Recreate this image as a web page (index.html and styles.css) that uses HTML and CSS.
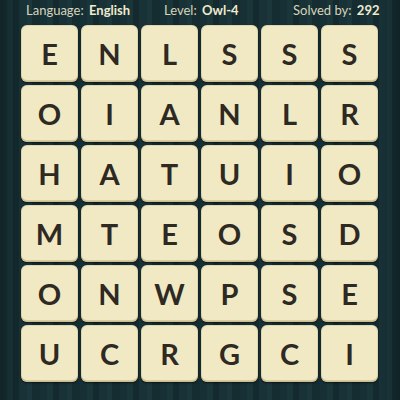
FILE: index.html
```html
<!DOCTYPE html>
<html>
<head>
<meta charset="utf-8">
<link rel="stylesheet" href="styles.css">
</head>
<body>
<div class="page">
  <div class="header">
    <div class="item">Language: <b>English</b></div>
    <div class="item">Level: <b>Owl-4</b></div>
    <div class="item right">Solved by: <b>292</b></div>
  </div>
  <div class="board">
    <div class="tile">E</div><div class="tile">N</div><div class="tile">L</div><div class="tile">S</div><div class="tile">S</div><div class="tile">S</div>
    <div class="tile">O</div><div class="tile">I</div><div class="tile">A</div><div class="tile">N</div><div class="tile">L</div><div class="tile">R</div>
    <div class="tile">H</div><div class="tile">A</div><div class="tile">T</div><div class="tile">U</div><div class="tile">I</div><div class="tile">O</div>
    <div class="tile">M</div><div class="tile">T</div><div class="tile">E</div><div class="tile">O</div><div class="tile">S</div><div class="tile">D</div>
    <div class="tile">O</div><div class="tile">N</div><div class="tile">W</div><div class="tile">P</div><div class="tile">S</div><div class="tile">E</div>
    <div class="tile">U</div><div class="tile">C</div><div class="tile">R</div><div class="tile">G</div><div class="tile">C</div><div class="tile">I</div>
  </div>
</div>
</body>
</html>
```
FILE: styles.css
```css
html, body {
  margin: 0;
  padding: 0;
}
body {
  width: 400px;
  height: 400px;
  overflow: hidden;
  font-family: Lato, "Liberation Sans", sans-serif;
  background-color: #173034;
  background-image:
    linear-gradient(90deg, rgba(0,0,0,0.25) 0px, rgba(0,0,0,0) 22px, rgba(0,0,0,0) 378px, rgba(0,0,0,0.2) 400px),
    repeating-linear-gradient(90deg,
      #163035 0px, #163035 7px,
      #1a3639 7px, #1a3639 13px,
      #142a2f 13px, #142a2f 19px,
      #183237 19px, #183237 27px,
      #1b373b 27px, #1b373b 32px,
      #152c31 32px, #152c31 40px);
}
.page {
  width: 400px;
  height: 400px;
}
.header {
  height: 21px;
  line-height: 21px;
  font-size: 13px;
  color: #d6d4bb;
  display: grid;
  grid-template-columns: 138px 129px 1fr;
  padding: 0 27px 0 26px;
  white-space: nowrap;
}
.header b {
  font-weight: 700;
  color: #efebcf;
  margin-left: 2px;
}
.right {
  text-align: right;
}
.board {
  display: grid;
  grid-template-columns: repeat(6, 57px);
  grid-auto-rows: 57px;
  gap: 3px;
  padding: 4px 0 0 21px;
}
.tile {
  background: #f1e9c4;
  border-radius: 6px;
  box-shadow:
    inset 0 -2px 0 rgba(170,150,95,0.35),
    inset 0 0 0 1px rgba(120,100,60,0.15),
    0 1px 2px rgba(0,0,0,0.55);
  display: flex;
  align-items: center;
  justify-content: center;
  font-size: 29px;
  font-weight: 700;
  color: #2e2922;
}
```
